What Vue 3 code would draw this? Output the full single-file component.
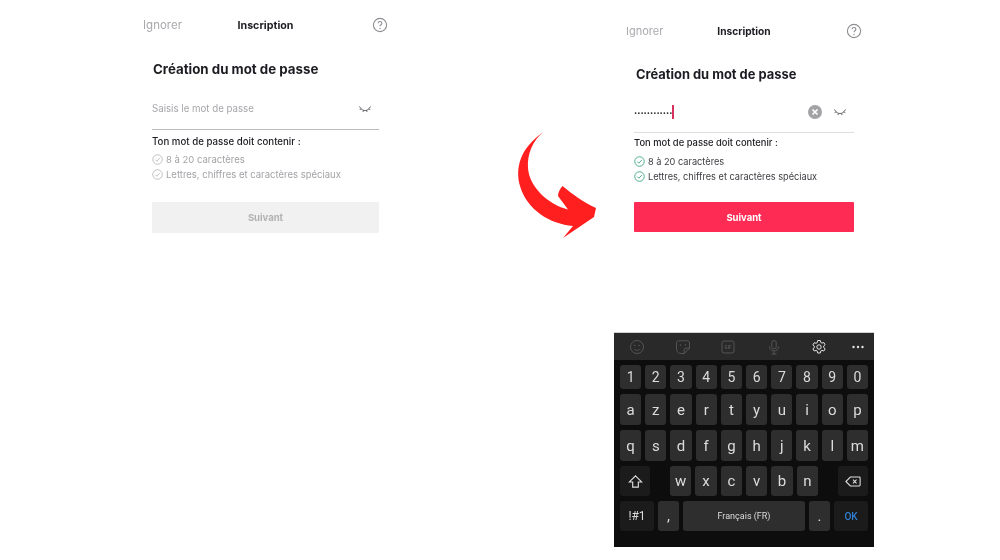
<template>
  <div class="page">
    <section class="screen screen-left">
      <header class="top">
        <span class="skip">Ignorer</span>
        <span class="heading">Inscription</span>
        <svg class="help" viewBox="0 0 16 16">
          <circle cx="8" cy="8" r="6.6" />
          <path d="M6.1 6.3c0-1.1.9-1.8 1.9-1.8s1.9.7 1.9 1.7c0 1.5-1.9 1.6-1.9 3.1" />
          <circle class="dot" cx="8" cy="11.5" r=".7" />
        </svg>
      </header>
      <div class="form">
        <h1>Création du mot de passe</h1>
        <div class="field">
          <span class="placeholder">Saisis le mot de passe</span>
          <svg class="eye" viewBox="0 0 14 8">
            <path d="M1.5 1.5C3 4.5 5 5.500 7 5.500s4-1 5.500-4M3 3.500 1.800 5M5.500 5.300 5 7M8.500 5.300 9 7M11 3.500 12.200 5" />
          </svg>
        </div>
        <p class="rules-title">Ton mot de passe doit contenir :</p>
        <ul class="rules">
          <li v-for="rule in rules" :key="rule">
            <svg class="check" viewBox="0 0 12 12">
              <circle cx="6" cy="6" r="5.200" />
              <path d="M3.600 6.200 5.300 7.900 8.500 4.500" />
            </svg>
            {{ rule }}
          </li>
        </ul>
        <button class="next">Suivant</button>
      </div>
    </section>

    <svg class="arrow" viewBox="0 0 100 130">
      <path d="M38.500 12C28 20 22 34 23 48C24 66 42 84 63 89.500L53 76C53 72 55 69 57.500 66C68 75 80 83 91 88L89 97L58 118L68 106C45 104 22 90 15 66C10 48 15 28 38.500 12Z" />
    </svg>

    <div class="phone">
      <section class="screen screen-right">
        <header class="top">
          <span class="skip">Ignorer</span>
          <span class="heading">Inscription</span>
          <svg class="help" viewBox="0 0 16 16">
            <circle cx="8" cy="8" r="6.6" />
            <path d="M6.1 6.3c0-1.1.9-1.8 1.9-1.8s1.9.7 1.9 1.7c0 1.5-1.9 1.6-1.9 3.1" />
            <circle class="dot" cx="8" cy="11.5" r=".7" />
          </svg>
        </header>
        <div class="form">
          <h1>Création du mot de passe</h1>
          <div class="field">
            <span class="dots">••••••••••••</span>
            <span class="caret"></span>
            <svg class="clear" viewBox="0 0 14 14">
              <circle cx="7" cy="7" r="7" />
              <path d="M4.500 4.500 9.500 9.500M9.500 4.500 4.500 9.500" />
            </svg>
            <svg class="eye" viewBox="0 0 14 8">
              <path d="M1.500 1.500C3 4.500 5 5.500 7 5.500s4-1 5.500-4M3 3.500 1.800 5M5.500 5.300 5 7M8.500 5.300 9 7M11 3.500 12.200 5" />
            </svg>
          </div>
          <p class="rules-title">Ton mot de passe doit contenir :</p>
          <ul class="rules">
            <li v-for="rule in rules" :key="rule">
              <svg class="check" viewBox="0 0 12 12">
                <circle cx="6" cy="6" r="5.200" />
                <path d="M3.600 6.200 5.300 7.900 8.500 4.500" />
              </svg>
              {{ rule }}
            </li>
          </ul>
          <button class="next">Suivant</button>
        </div>
      </section>

      <div class="keyboard">
        <div class="tools">
          <svg viewBox="0 0 16 16">
            <circle cx="8" cy="8" r="6.500" />
            <circle class="fill" cx="5.800" cy="6.500" r=".8" />
            <circle class="fill" cx="10.200" cy="6.500" r=".8" />
            <path d="M5 9.800c1.500 2 4.500 2 6 0" />
          </svg>
          <svg viewBox="0 0 16 16">
            <path d="M3.500 1.800h9a2 2 0 0 1 2 2v5.400l-5.300 5.300H6A4.500 4.500 0 0 1 1.500 10V3.800a2 2 0 0 1 2-2z" />
            <path d="M9.200 14.500V11a1.800 1.800 0 0 1 1.800-1.800h3.500" />
            <circle class="fill" cx="5.500" cy="6" r=".8" />
            <circle class="fill" cx="10.500" cy="6" r=".8" />
          </svg>
          <svg viewBox="0 0 16 16">
            <rect x="2" y="2" width="12" height="12" rx="2" />
            <text x="8" y="9.800" class="gif">GIF</text>
          </svg>
          <svg viewBox="0 0 16 16">
            <rect x="5.800" y="1.500" width="4.400" height="8.500" rx="2.200" />
            <path d="M3.500 7.500c0 6 9 6 9 0M8 12.500v2.500M5.500 15h5" />
          </svg>
          <svg class="gear" viewBox="0 0 16 16">
            <path d="M6.700 1.500h2.600l.4 1.900 1.300.7 1.800-.6 1.300 2.200-1.400 1.300v1.500l1.400 1.300-1.300 2.200-1.800-.6-1.300.7-.4 1.900H6.700l-.4-1.900-1.300-.7-1.800.6-1.300-2.200L3.300 8.700V7.200L1.900 5.900l1.300-2.200 1.800.6 1.300-.7z" />
            <circle cx="8" cy="8" r="2.200" />
          </svg>
          <svg class="more" viewBox="0 0 16 16">
            <circle cx="3.500" cy="8" r="1.200" />
            <circle cx="8" cy="8" r="1.200" />
            <circle cx="12.500" cy="8" r="1.200" />
          </svg>
        </div>
        <div class="keys">
          <div class="row row-digits">
            <span v-for="k in digits" :key="k" class="key">{{ k }}</span>
          </div>
          <div class="row row-letters">
            <span v-for="k in rowA" :key="k" class="key">{{ k }}</span>
          </div>
          <div class="row row-letters">
            <span v-for="k in rowB" :key="k" class="key">{{ k }}</span>
          </div>
          <div class="row row-shift">
            <span class="key key-dim key-side">
              <svg class="key-icon" viewBox="0 0 16 16">
                <path d="M8 2 14.500 8.500H11V14H5V8.500H1.500z" />
              </svg>
            </span>
            <div class="middle">
              <span v-for="k in rowC" :key="k" class="key">{{ k }}</span>
            </div>
            <span class="key key-dim key-side">
              <svg class="key-icon key-back" viewBox="0 0 18 14">
                <path d="M6 2h10a1 1 0 0 1 1 1v8a1 1 0 0 1-1 1H6L1 7z" />
                <path d="M9 5l4 4M13 5l-4 4" />
              </svg>
            </span>
          </div>
          <div class="row row-bottom">
            <span class="key key-dim key-sym">!#1</span>
            <span class="key key-punct">,</span>
            <span class="key key-space">Français (FR)</span>
            <span class="key key-punct">.</span>
            <span class="key key-dim key-ok">OK</span>
          </div>
        </div>
      </div>
    </div>
  </div>
</template>

<script setup>
const rules = ['8 à 20 caractères', 'Lettres, chiffres et caractères spéciaux']
const digits = ['1', '2', '3', '4', '5', '6', '7', '8', '9', '0']
const rowA = ['a', 'z', 'e', 'r', 't', 'y', 'u', 'i', 'o', 'p']
const rowB = ['q', 's', 'd', 'f', 'g', 'h', 'j', 'k', 'l', 'm']
const rowC = ['w', 'x', 'c', 'v', 'b', 'n']
</script>

<style>
html,
body {
  margin: 0;
  background: #fff;
}
</style>

<style scoped>
.page {
  display: flex;
  width: 1000px;
  height: 560px;
  overflow: hidden;
  background: #fff;
  font-family: Inter, "Liberation Sans", sans-serif;
  color: #1c1c22;
  filter: blur(0.35px);
}

.screen-left {
  width: 245px;
  margin-left: 143px;
  padding-top: 17px;
}

.screen-right {
  height: 332px;
  padding: 23px 12px 0;
  box-sizing: border-box;
}

.top {
  display: grid;
  grid-template-columns: 1fr auto 1fr;
  align-items: center;
  height: 16px;
}

.skip {
  font-size: 11.5px;
  color: #a9a9ae;
}

.screen-right .skip {
  font-size: 11px;
}

.heading {
  font-size: 10.7px;
  font-weight: 700;
}

.screen-right .heading {
  font-size: 10.2px;
}

.help {
  justify-self: end;
  width: 16px;
  height: 16px;
  fill: none;
  stroke: #8d8d92;
  stroke-width: 1.1;
}

.help .dot {
  fill: #8d8d92;
  stroke: none;
}

.screen-left .form {
  padding: 0 9px;
}

.screen-right .form {
  padding: 0 8px;
}

h1 {
  margin: 0;
  font-size: 13.3px;
  line-height: 18px;
  font-weight: 700;
  padding-left: 1px;
}

.screen-left h1 {
  margin-top: 27px;
}

.screen-right h1 {
  margin-top: 27px;
  padding-left: 2px;
  font-size: 12.9px;
}

.field {
  display: flex;
  align-items: center;
  border-bottom: 1px solid #bdbdbd;
}

.screen-left .field {
  height: 41px;
  margin-top: 10px;
}

.screen-right .field {
  height: 40px;
  margin-top: 8px;
  border-bottom-color: #dedede;
}

.placeholder {
  font-size: 9.7px;
  color: #a6a6aa;
}

.eye {
  width: 14px;
  height: 8px;
  margin-left: auto;
  margin-right: 7px;
  fill: none;
  stroke: #55555a;
  stroke-width: 0.9;
}

.dots {
  font-size: 5.7px;
  color: #222;
}

.caret {
  width: 1.5px;
  height: 14px;
  background: #d8325c;
}

.clear {
  width: 14px;
  height: 14px;
  margin-left: auto;
}

.clear circle {
  fill: #a3a3a6;
}

.clear path {
  fill: none;
  stroke: #fff;
  stroke-width: 1.6;
}

.clear + .eye {
  margin-left: 11px;
  margin-right: 7px;
}

.rules-title {
  margin: 4px 0 0;
  font-size: 9.7px;
  line-height: 16px;
  font-weight: 500;
}

.screen-right .rules-title {
  margin-top: 2px;
  font-size: 9.4px;
}

.rules {
  list-style: none;
  margin: 2px 0 0;
  padding: 0;
}

.screen-right .rules {
  margin-top: 3px;
}

.rules li {
  display: flex;
  align-items: center;
  gap: 3px;
  height: 15px;
  font-size: 9.5px;
}

.screen-left .rules li {
  color: #a3a3a8;
}

.screen-right .rules li {
  color: #3c3c42;
  font-size: 9.2px;
}

.check {
  width: 11px;
  height: 11px;
  fill: none;
  stroke-width: 0.9;
}

.screen-left .check {
  stroke: #b5b5b8;
}

.screen-right .check {
  stroke: #2f9e75;
}

.next {
  display: block;
  width: 100%;
  border: 0;
  border-radius: 1px;
  font-family: inherit;
  font-size: 9.5px;
  font-weight: 700;
}

.screen-left .next {
  height: 31px;
  margin-top: 20px;
  background: #f1f1f1;
  color: #b2b2b4;
}

.screen-right .next {
  height: 30px;
  margin-top: 18px;
  background: #fe2c55;
  color: #fff;
}

.arrow {
  width: 100px;
  height: 130px;
  margin: 120px 9px 0 117px;
  flex: none;
}

.arrow path {
  fill: #ff1f1f;
}

.phone {
  width: 260px;
  flex: none;
}

.keyboard {
  height: 214px;
  border-top: 1px solid #d0d0d0;
  background: #0d0d0d;
  font-family: Roboto, "Liberation Sans", sans-serif;
}

.tools {
  display: flex;
  align-items: center;
  gap: 29.5px;
  height: 27px;
  padding-left: 15px;
  background: #29292a;
}

.tools svg {
  width: 16px;
  height: 16px;
  fill: none;
  stroke: #555557;
  stroke-width: 1;
}

.tools .fill {
  fill: #555557;
  stroke: none;
}

.tools .gif {
  fill: #555557;
  stroke: none;
  font-size: 4.5px;
  font-weight: 700;
  text-anchor: middle;
}

.tools .gear {
  stroke: #e4e4e4;
}

.tools .more {
  margin-left: -6.5px;
  fill: #e4e4e4;
  stroke: none;
}

.keys {
  padding: 5px 6px 0;
}

.row {
  display: flex;
  gap: 4px;
  margin-bottom: 5px;
}

.key {
  flex: 1;
  display: flex;
  align-items: center;
  justify-content: center;
  border-radius: 3px;
  background: #2e2e2e;
  color: #dcdcdc;
  font-size: 15px;
}

.row-digits .key {
  height: 24px;
  font-size: 14px;
}

.row-letters .key {
  height: 31px;
}

.row-shift {
  justify-content: space-between;
  gap: 0;
}

.middle {
  display: flex;
  gap: 4px;
  width: 148px;
}

.middle .key {
  height: 30px;
}

.key-dim {
  background: #1b1b1b;
}

.key-side {
  flex: none;
  width: 30px;
}

.key-icon {
  width: 15px;
  height: 15px;
  fill: none;
  stroke: #e0e0e0;
  stroke-width: 1.2;
}

.key-back {
  width: 16px;
  height: 13px;
}

.row-bottom .key {
  height: 30px;
}

.key-sym {
  flex: none;
  width: 34px;
  font-size: 12px;
}

.key-punct {
  flex: none;
  width: 21px;
}

.key-space {
  font-size: 9px;
}

.key-ok {
  flex: none;
  width: 34px;
  font-size: 10px;
  font-weight: 500;
  color: #2f7fd6;
}
</style>
